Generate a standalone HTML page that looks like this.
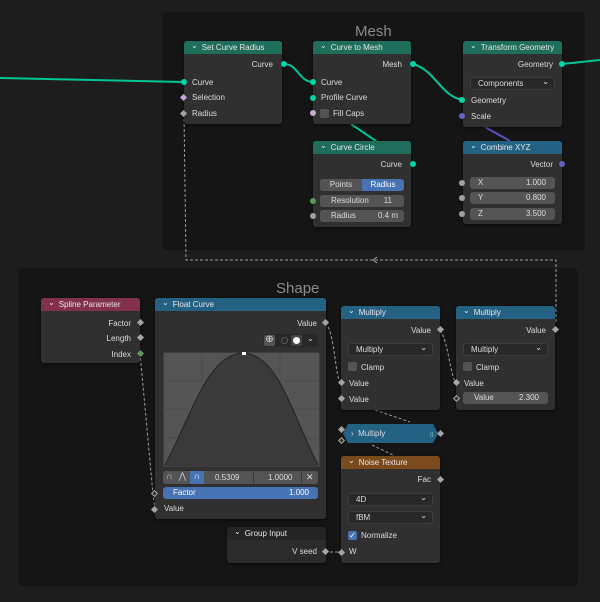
<!DOCTYPE html>
<html><head><meta charset="utf-8"><style>
*{box-sizing:border-box;margin:0;padding:0}
body{width:600px;height:602px;background:#1d1d1d;position:relative;overflow:hidden;font-family:"Liberation Sans",sans-serif;font-size:8px;color:#dcdcdc}
.fr{position:absolute;background:#151515;border-radius:5px}
.ft{position:absolute;font-size:15px;color:#8a8a8a}
.n{position:absolute;background:#303030;border-radius:3px;box-shadow:0 1px 3px rgba(0,0,0,.6)}
.h{height:13px;border-radius:3px 3px 0 0;padding-left:7px;line-height:13px;font-size:8px;color:#e6e6e6}
.h:before{content:"⌄";margin-right:4px;position:relative;top:-2px}
.r{position:absolute;font-size:8px;white-space:nowrap}
.rr{right:9px;text-align:right}
.s{position:absolute;width:6px;height:6px;border-radius:50%}
.g{background:#00d6a3}
.d{position:absolute;width:5px;height:5px;background:#a5a5a5;transform:rotate(45deg)}
.f{position:absolute;background:#545454;border-radius:3px;height:12px;line-height:12px;font-size:8px;padding:0 8px}
.dd{position:absolute;background:#282828;border:1px solid #3c3c3c;border-radius:3px;height:13px;line-height:11px;padding-left:7px;font-size:8px}
.dd:after{content:"⌄";position:absolute;right:5px;top:-2px}
.cb{position:absolute;width:9px;height:9px;background:#545454;border-radius:2px}
</style></head><body>
<div class="fr" style="left:162px;top:12px;width:423px;height:238px"></div>
<div class="ft" style="left:355px;top:23px">Mesh</div>
<div class="fr" style="left:18px;top:268px;width:560px;height:318px"></div>
<div class="ft" style="left:276px;top:280px">Shape</div>

<svg width="600" height="602" style="position:absolute;left:0;top:0">
<g fill="none" stroke-width="2">
<path d="M0 78 L184 82" stroke="#00c698"/>
<path d="M284 64 C298 64 299 82 313 82" stroke="#00c698"/>
<path d="M413 64 C435 70 440 95 462 100" stroke="#00c698"/>
<path d="M562 64 L600 60" stroke="#00c698"/>
<path d="M351 124 L376 141" stroke="#00c698"/>
<path d="M485 127 L510 141" stroke="#5a50c8"/>
</g>
<g fill="none" stroke="#9a9a9a" stroke-width="1" stroke-dasharray="3 2">
<path d="M184 114 L186 260 L556 260 L556 323"/>
<path d="M140 353 L153 494 L155 509"/>
<path d="M325 323 C335 330 335 380 341 383"/>
<path d="M440 330 C448 340 450 375 456 383"/>
<path d="M375 410 L410 422"/>
<path d="M372 445 L395 456"/>
<path d="M325 552 L341 552"/>
</g>
<path d="M377 257 L373 260 L377 263" stroke="#9a9a9a" fill="none"/>
</svg>

<!-- Set Curve Radius -->
<div class="n" style="left:184px;top:41px;width:98px;height:83px"><div class="h" style="background:#1f6e5b">Set Curve Radius</div>
<div class="r rr" style="top:19px">Curve</div><div class="r" style="left:8px;top:37px">Curve</div><div class="r" style="left:8px;top:52px">Selection</div><div class="r" style="left:8px;top:68px">Radius</div></div>
<div class="s g" style="left:281px;top:61px"></div><div class="s g" style="left:181px;top:79px"></div>
<div class="d" style="left:181px;top:95px;background:#c9a4dc"></div><div class="d" style="left:181px;top:111px"></div>

<!-- Curve to Mesh -->
<div class="n" style="left:313px;top:41px;width:98px;height:83px"><div class="h" style="background:#1f6e5b">Curve to Mesh</div>
<div class="r rr" style="top:19px">Mesh</div><div class="r" style="left:8px;top:37px">Curve</div><div class="r" style="left:8px;top:52px">Profile Curve</div><div class="cb" style="left:7px;top:68px"></div><div class="r" style="left:20px;top:68px">Fill Caps</div></div>
<div class="s g" style="left:410px;top:61px"></div><div class="s g" style="left:310px;top:79px"></div><div class="s g" style="left:310px;top:95px"></div><div class="s" style="left:310px;top:110px;background:#cca6d8"></div>

<!-- Transform Geometry -->
<div class="n" style="left:463px;top:41px;width:99px;height:86px"><div class="h" style="background:#1f6e5b">Transform Geometry</div>
<div class="r rr" style="top:19px">Geometry</div><div class="dd" style="left:7px;top:36px;width:85px">Components</div><div class="r" style="left:8px;top:55px">Geometry</div><div class="r" style="left:8px;top:71px">Scale</div></div>
<div class="s g" style="left:559px;top:61px"></div><div class="s g" style="left:459px;top:97px"></div><div class="s" style="left:459px;top:113px;background:#6363c7"></div>

<!-- Curve Circle -->
<div class="n" style="left:313px;top:141px;width:98px;height:86px"><div class="h" style="background:#1f6e5b">Curve Circle</div>
<div class="r rr" style="top:19px">Curve</div>
<div class="f" style="left:7px;top:38px;width:42px;border-radius:3px 0 0 3px;text-align:center;padding:0">Points</div><div class="f" style="left:49px;top:38px;width:42px;background:#4772b3;color:#fff;border-radius:0 3px 3px 0;text-align:center;padding:0">Radius</div>
<div class="f" style="left:7px;top:54px;width:84px"><span style="margin-left:3px">Resolution</span><span style="position:absolute;right:12px">11</span></div>
<div class="f" style="left:7px;top:69px;width:84px"><span style="margin-left:3px">Radius</span><span style="position:absolute;right:6px">0.4 m</span></div></div>
<div class="s g" style="left:410px;top:161px"></div><div class="s" style="left:310px;top:198px;background:#5a9a5a"></div><div class="s" style="left:310px;top:213px;background:#a1a1a1"></div>

<!-- Combine XYZ -->
<div class="n" style="left:463px;top:141px;width:99px;height:83px"><div class="h" style="background:#246283">Combine XYZ</div>
<div class="r rr" style="top:19px">Vector</div>
<div class="f" style="left:7px;top:36px;width:85px">X<span style="position:absolute;right:9px">1.000</span></div>
<div class="f" style="left:7px;top:51px;width:85px">Y<span style="position:absolute;right:9px">0.800</span></div>
<div class="f" style="left:7px;top:67px;width:85px">Z<span style="position:absolute;right:9px">3.500</span></div></div>
<div class="s" style="left:559px;top:161px;background:#6363c7"></div>
<div class="s" style="left:459px;top:180px;background:#a1a1a1"></div><div class="s" style="left:459px;top:195px;background:#a1a1a1"></div><div class="s" style="left:459px;top:211px;background:#a1a1a1"></div>

<!-- Spline Parameter -->
<div class="n" style="left:41px;top:298px;width:99px;height:65px"><div class="h" style="background:#83314a">Spline Parameter</div>
<div class="r rr" style="top:21px">Factor</div><div class="r rr" style="top:36px">Length</div><div class="r rr" style="top:52px">Index</div></div>
<div class="d" style="left:138px;top:320px"></div><div class="d" style="left:138px;top:335px"></div><div class="d" style="left:138px;top:351px;background:#5a9a5a"></div>

<!-- Float Curve -->
<div class="n" style="left:155px;top:298px;width:171px;height:221px"><div class="h" style="background:#246283">Float Curve</div>
<div class="r rr" style="top:21px">Value</div>
<div style="position:absolute;left:108px;top:36px;width:55px;height:13px;background:#282828;border-radius:3px"></div>
<div style="position:absolute;left:109px;top:37px;width:11px;height:11px;background:#545454;border-radius:2px;font-size:10px;line-height:10px;text-align:center">⊕</div>
<div style="position:absolute;left:126px;top:39px;width:7px;height:7px;border:1px solid #555;border-radius:50%"></div>
<div style="position:absolute;left:136px;top:37px;width:11px;height:11px;background:#444;border-radius:2px"><div style="margin:2px;width:7px;height:7px;background:#fff;border-radius:50%"></div></div>
<div class="r" style="left:152px;top:36px">⌄</div>
<svg style="position:absolute;left:8px;top:54px" width="157" height="115"><rect x="0" y="0" width="157" height="115" fill="#555" stroke="#282828"/>
<g stroke="#4a4a4a" stroke-width="1"><path d="M39 0V115M78 0V115M117 0V115M0 29H157M0 57H157M0 86H157"/></g>
<path d="M2 113 C30 60 45 2 80 1 C115 2 128 60 155 113 L155 114 L2 114Z" fill="#3a3a3a"/>
<path d="M2 113 C30 60 45 2 80 1 C115 2 128 60 155 113" fill="none" stroke="#222" stroke-width="1"/>
<rect x="79" y="0" width="4" height="3" fill="#fff"/></svg>
<div style="position:absolute;left:8px;top:173px;width:155px;height:13px;background:#545454;border-radius:3px"></div>
<div style="position:absolute;left:8px;top:173px;width:13px;height:13px;color:#ccc;font-size:9px;text-align:center">∩</div>
<div style="position:absolute;left:21px;top:173px;width:13px;height:13px;color:#ccc;font-size:9px;text-align:center">⋀</div>
<div style="position:absolute;left:35px;top:173px;width:14px;height:13px;background:#4772b3;color:#fff;font-size:9px;text-align:center">∩</div>
<div class="r" style="left:60px;top:175px">0.5309</div><div style="position:absolute;left:98px;top:173px;width:1px;height:13px;background:#3a3a3a"></div>
<div class="r" style="left:113px;top:175px">1.0000</div><div style="position:absolute;left:146px;top:173px;width:1px;height:13px;background:#3a3a3a"></div>
<div class="r" style="left:151px;top:174px;font-size:9px">✕</div>
<div class="f" style="left:8px;top:189px;width:155px;background:#4772b3;color:#fff;padding-left:10px">Factor<span style="position:absolute;right:9px">1.000</span></div>
<div class="r" style="left:9px;top:206px">Value</div></div>
<div class="d" style="left:323px;top:320px"></div><div class="d" style="left:152px;top:491px;background:#303030;border:1px solid #aaa"></div><div class="d" style="left:152px;top:507px"></div>

<!-- Group Input -->
<div class="n" style="left:227px;top:527px;width:99px;height:36px;background:#2b2b2b"><div class="h" style="background:#242424">Group Input</div>
<div class="r rr" style="top:20px">V seed</div></div>
<div class="d" style="left:323px;top:549px"></div>

<!-- Multiply 1 -->
<div class="n" style="left:341px;top:306px;width:99px;height:104px"><div class="h" style="background:#246283">Multiply</div>
<div class="r rr" style="top:20px">Value</div><div class="dd" style="left:7px;top:37px;width:85px">Multiply</div>
<div class="cb" style="left:7px;top:56px"></div><div class="r" style="left:20px;top:57px">Clamp</div>
<div class="r" style="left:8px;top:73px">Value</div><div class="r" style="left:8px;top:89px">Value</div></div>
<div class="d" style="left:438px;top:327px"></div><div class="d" style="left:339px;top:380px"></div><div class="d" style="left:339px;top:396px"></div>

<!-- Multiply 2 -->
<div class="n" style="left:456px;top:306px;width:99px;height:104px"><div class="h" style="background:#246283">Multiply</div>
<div class="r rr" style="top:20px">Value</div><div class="dd" style="left:7px;top:37px;width:85px">Multiply</div>
<div class="cb" style="left:7px;top:56px"></div><div class="r" style="left:20px;top:57px">Clamp</div>
<div class="r" style="left:8px;top:73px">Value</div>
<div class="f" style="left:7px;top:86px;width:85px;padding-left:11px">Value<span style="position:absolute;right:9px">2.300</span></div></div>
<div class="d" style="left:553px;top:327px"></div><div class="d" style="left:454px;top:380px"></div><div class="d" style="left:454px;top:396px;background:#303030;border:1px solid #aaa"></div>

<!-- collapsed multiply -->
<div style="position:absolute;left:343px;top:424px;width:95px;height:19px;background:#246283;clip-path:polygon(5px 0,90px 0,95px 9.5px,90px 19px,5px 19px,0 9.5px)"></div>
<div class="r" style="left:351px;top:429px">›&nbsp; Multiply</div><div class="r" style="left:429px;top:429px;color:#7aa">॥</div>
<div class="d" style="left:339px;top:427px"></div><div class="d" style="left:339px;top:438px;background:#303030;border:1px solid #aaa"></div><div class="d" style="left:438px;top:431px"></div>

<!-- Noise Texture -->
<div class="n" style="left:341px;top:456px;width:99px;height:107px"><div class="h" style="background:#7b4a1d">Noise Texture</div>
<div class="r rr" style="top:19px">Fac</div>
<div class="dd" style="left:7px;top:37px;width:85px">4D</div><div class="dd" style="left:7px;top:55px;width:85px">fBM</div>
<div class="cb" style="left:7px;top:75px;background:#4772b3;color:#fff;font-size:8px;line-height:9px;text-align:center">✓</div><div class="r" style="left:20px;top:75px">Normalize</div>
<div class="r" style="left:8px;top:91px">W</div></div>
<div class="d" style="left:438px;top:477px"></div><div class="d" style="left:339px;top:550px"></div>
</body></html>
